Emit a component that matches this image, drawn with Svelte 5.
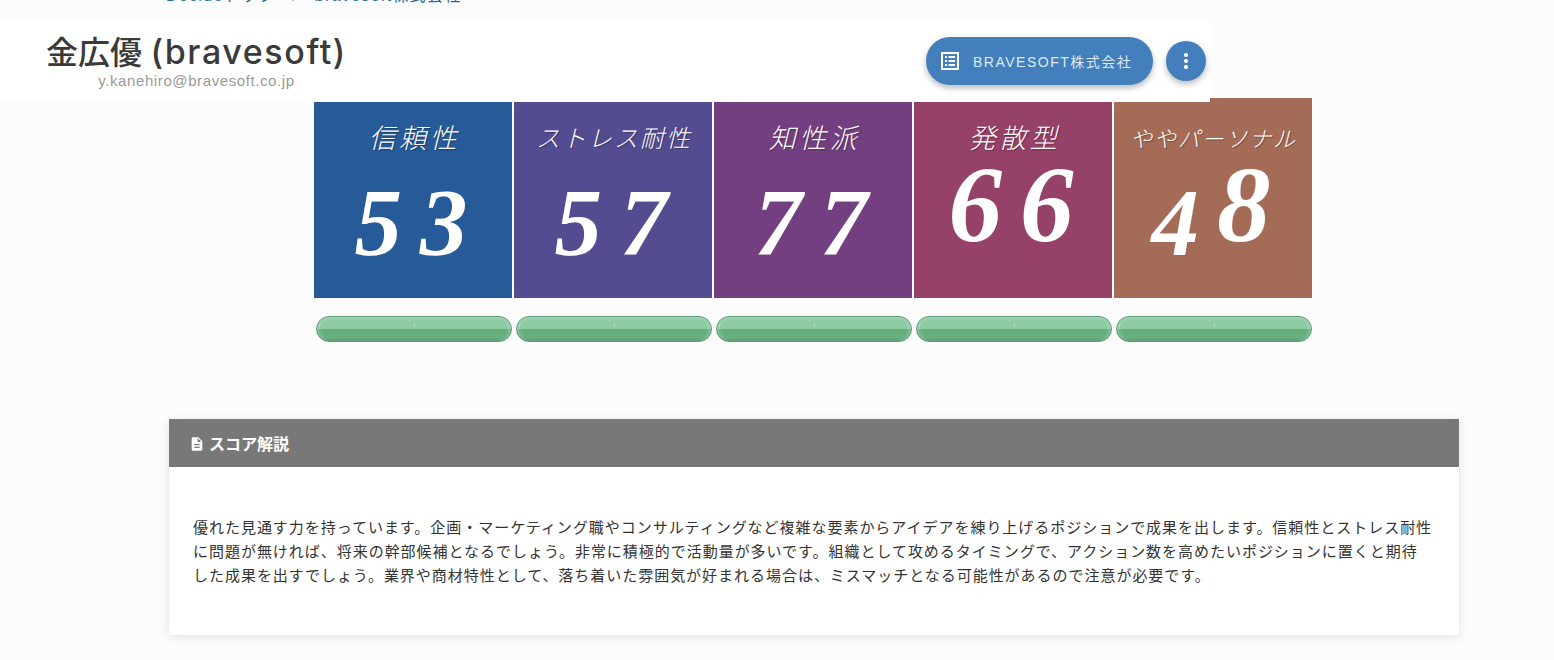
<script lang="ts">
  const scores = [
    { label: "信頼性", value: 53, color: "#265a98", size: "" },
    { label: "ストレス耐性", value: 57, color: "#544c91", size: "mid" },
    { label: "知性派", value: 77, color: "#743f80", size: "" },
    { label: "発散型", value: 66, color: "#964168", size: "" },
    { label: "ややパーソナル", value: 48, color: "#a46b57", size: "small" },
  ];

  // the reference numerals are old-style: these digits hang below the baseline
  const hanging = "3457";

  const commentary = [
    "優れた見通す力を持っています。企画・マーケティング職やコンサルティングなど複雑な要素からアイデアを練り上げるポジションで成果を出します。信頼性とストレス耐性",
    "に問題が無ければ、将来の幹部候補となるでしょう。非常に積極的で活動量が多いです。組織として攻めるタイミングで、アクション数を高めたいポジションに置くと期待",
    "した成果を出すでしょう。業界や商材特性として、落ち着いた雰囲気が好まれる場合は、ミスマッチとなる可能性があるので注意が必要です。",
  ];
</script>

<div class="page">
  <nav class="crumbs">
    <a href="#top">Decideトップ</a>
    <span class="sep">/</span>
    <a href="#top">bravesoft株式会社</a>
  </nav>

  <header class="head">
    <div class="who">
      <h1>金広優 <span>(bravesoft)</span></h1>
      <p>y.kanehiro@bravesoft.co.jp</p>
    </div>
    <div class="actions">
      <button class="company">
        <svg viewBox="0 0 18 18" width="18" height="18">
          <path fill="#fff" d="M0 0h18v18H0zM2 2v14h14V2z" fill-rule="evenodd" />
          <path fill="#fff" d="M4 4h2v2H4zM7.5 4H14v2H7.5zM4 8h2v2H4zM7.5 8H14v2H7.5zM4 12h2v2H4zM7.5 12H14v2H7.5z" />
        </svg>
        <span>BRAVESOFT株式会社</span>
      </button>
      <button class="more" aria-label="menu">
        <i></i><i></i><i></i>
      </button>
    </div>
  </header>

  <section class="scores">
    {#each scores as s}
      <div class="tile" style="background:{s.color}">
        <div class="label {s.size}">{s.label}</div>
        <div class="num">{#each String(s.value) as d}<span class:hang={hanging.includes(d)}>{d}</span>{/each}</div>
      </div>
    {/each}
    {#each scores as s}
      <div class="bar"><b></b></div>
    {/each}
  </section>

  <section class="panel">
    <h2>
      <svg viewBox="0 0 24 24" width="16" height="16">
        <path fill="#fff" d="M14 2H6a2 2 0 0 0-2 2v16a2 2 0 0 0 2 2h12a2 2 0 0 0 2-2V8zm2 16H8v-2h8zm0-4H8v-2h8zm-3-5V3.5L18.5 9z" />
      </svg>
      スコア解説
    </h2>
    <div class="body">
      {#each commentary as line}
        <p>{line}</p>
      {/each}
    </div>
  </section>
</div>

<style>
  :global(body) {
    margin: 0;
    background: #fcfcfc;
    font-family: "Noto Sans CJK JP", "Noto Sans", sans-serif;
    color: #333;
  }

  .page {
    height: 660px;
    overflow: hidden;
  }

  .crumbs {
    height: 22px;
    margin-top: -15px;
    margin-bottom: 15px;
    padding-left: 166px;
    font-family: "Liberation Sans", "Noto Sans CJK JP", sans-serif;
    font-size: 16px;
    line-height: 22px;
    letter-spacing: 1.3px;
    box-sizing: border-box;
    white-space: nowrap;
  }

  .crumbs a {
    color: #1f6a99;
    text-decoration: none;
  }

  .sep {
    color: #aaa;
    margin: 0 11px;
  }

  .head {
    position: relative;
    z-index: 2;
    width: 1210px;
    height: 80px;
    background: #fff;
    display: flex;
    justify-content: space-between;
    align-items: flex-start;
  }

  .who {
    margin-left: 46px;
    padding-top: 9px;
    text-align: center;
  }

  h1 {
    margin: 0;
    font-family: "Inter", "Noto Sans CJK JP", sans-serif;
    font-size: 32px;
    font-weight: 500;
    line-height: 42px;
    color: #3a3a3a;
  }

  h1 span {
    font-size: 34px;
    letter-spacing: 1.6px;
  }

  .who p {
    margin: -2px 0 0;
    font-family: "Liberation Sans", sans-serif;
    font-size: 15px;
    line-height: 18px;
    letter-spacing: 0.6px;
    color: #999;
  }

  .actions {
    display: flex;
    align-items: center;
    gap: 13px;
    padding: 15px 4px 0 0;
  }

  button {
    border: 0;
    background: #437fbc;
    color: #fff;
    box-shadow: 0 3px 6px rgba(0, 0, 0, 0.28);
  }

  .company {
    width: 227px;
    height: 48px;
    border-radius: 24px;
    display: flex;
    align-items: center;
    gap: 14px;
    padding: 0 0 0 15px;
    font-family: "Liberation Sans", "Noto Sans CJK JP", sans-serif;
    font-size: 14px;
    letter-spacing: 1.5px;
    color: #dfe9f4;
  }

  .more {
    width: 40px;
    height: 40px;
    border-radius: 50%;
    display: flex;
    flex-direction: column;
    align-items: center;
    justify-content: center;
    gap: 2.5px;
    padding: 0;
  }

  .more i {
    width: 3.5px;
    height: 3.5px;
    border-radius: 50%;
    background: #fff;
  }

  .scores {
    width: 998px;
    margin: -4px 0 0 314px;
    display: grid;
    grid-template-columns: repeat(5, 198px);
    column-gap: 2px;
    row-gap: 18px;
  }

  .tile {
    height: 200px;
    color: #fff;
    text-align: center;
    overflow: hidden;
    font-style: italic;
  }

  .label {
    margin-top: 21px;
    height: 36px;
    padding-left: 3px;
    font-size: 27px;
    line-height: 36px;
    font-weight: 300;
    letter-spacing: 3.5px;
    color: #fff;
    text-shadow: 1px 1px 1px rgba(0, 0, 0, 0.3);
  }

  .label.mid {
    padding-left: 2px;
    font-size: 24px;
    letter-spacing: 2px;
  }

  .label.small {
    padding-left: 1px;
    font-size: 22px;
    letter-spacing: 1.8px;
  }

  .num {
    height: 108px;
    margin-top: -4px;
    padding-left: 14px;
    font-family: "Liberation Serif", serif;
    font-weight: 700;
    font-size: 107px;
    line-height: 108px;
    letter-spacing: 18px;
    white-space: nowrap;
  }

  .num span.hang {
    font-size: 95px;
    vertical-align: -14px;
  }

  .bar {
    position: relative;
    height: 26px;
    margin-left: 2px;
    box-sizing: border-box;
    border: 1px solid #5f9a78;
    border-radius: 13px;
    background: linear-gradient(to bottom, #9fd2b2 0, #8ccba2 4px, #8ccba2 48%, #65ae7e 52%, #65ae7e 85%, #5f9f77 100%);
    box-shadow: inset 4px 0 4px -3px rgba(255, 255, 255, 0.4), inset -4px 0 4px -3px rgba(255, 255, 255, 0.4);
  }

  .bar b {
    position: absolute;
    left: 97px;
    top: 6px;
    width: 1px;
    height: 4px;
    background: #b5dcc3;
  }

  .panel {
    width: 1290px;
    margin: 77px 0 0 169px;
    background: #fff;
    box-shadow: 0 2px 10px rgba(0, 0, 0, 0.1);
  }

  h2 {
    margin: 0;
    height: 48px;
    padding-left: 20px;
    display: flex;
    align-items: center;
    gap: 4px;
    background: #787878;
    color: #fff;
    font-size: 16px;
    font-weight: 700;
  }

  h2 svg {
    margin-top: 1px;
  }

  .body {
    padding: 48px 24px;
  }

  .body p {
    margin: 0;
    font-size: 15px;
    line-height: 24px;
    letter-spacing: 0.97px;
    color: #333;
    white-space: nowrap;
  }
</style>
